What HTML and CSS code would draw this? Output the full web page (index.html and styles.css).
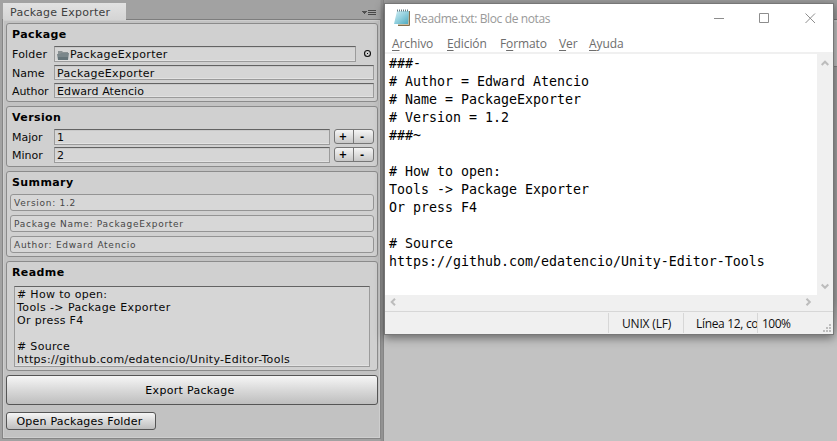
FILE: index.html
```
<!DOCTYPE html>
<html lang="es">
<head>
<meta charset="utf-8">
<title>Package Exporter</title>
<link rel="stylesheet" href="styles.css">
</head>
<body>
<main class="desktop">
  <section class="exporter">
    <header class="tabs">
      <div class="tab"><span class="t-tab">Package Exporter</span></div>
      <svg class="tab-menu" width="14" height="6" viewBox="0 0 14 6" shape-rendering="crispEdges"><path d="M0 1h5v1H4v1H3v1H2V3H1V2H0z" fill="#505050"/><path d="M6 0h8v1H6zM6 2h8v1H6zM6 4h8v1H6z" fill="#484848"/></svg>
    </header>
    <div class="panel">
      <div class="group package">
        <h2>Package</h2>
        <div class="row folder"><label class="l-folder">Folder</label>
          <div class="field object"><svg width="12" height="10" viewBox="0 0 12 10"><path d="M1 2V1h4l1 1h5v7H1z" fill="#8b9294"/><path d="M0 4h3l1-1h8l-1 7H1z" fill="#7b878b"/><path d="M1 7h10v3H1z" fill="#66757a"/></svg><span class="t-pe">PackageExporter</span></div>
          <svg class="picker" width="9" height="9" viewBox="0 0 9 9"><circle cx="4.5" cy="4.5" r="3" fill="none" stroke="#111" stroke-width="1.1"/><path d="M4 4h1v1H4z" fill="#000"/></svg>
        </div>
        <div class="row name"><label class="l-name">Name</label><div class="field"><span class="t-pe">PackageExporter</span></div></div>
        <div class="row author"><label class="l-author">Author</label><div class="field"><span class="t-ea">Edward Atencio</span></div></div>
      </div>
      <div class="group version">
        <h2>Version</h2>
        <div class="row major"><label>Major</label><div class="field"><span>1</span></div><div class="stepper"><b>+</b><b>-</b></div></div>
        <div class="row minor"><label>Minor</label><div class="field"><span>2</span></div><div class="stepper"><b>+</b><b>-</b></div></div>
      </div>
      <div class="group summary">
        <h2>Summary</h2>
        <div class="help"><span>Version: 1.2</span></div>
        <div class="help"><span>Package Name: PackageExporter</span></div>
        <div class="help"><span>Author: Edward Atencio</span></div>
      </div>
      <div class="group readme">
        <h2>Readme</h2>
        <div class="area"><p># How to open:</p><p class="wide">Tools -&gt; Package Exporter</p><p>Or press F4</p><p>&nbsp;</p><p># Source</p><p>https://github.com/edatencio/Unity-Editor-Tools</p></div>
      </div>
      <div class="button export"><span>Export Package</span></div>
      <div class="button open"><span>Open Packages Folder</span></div>
    </div>
  </section>
  <section class="backdrop">
    <div class="notepad">
      <header class="title">
        <svg width="17" height="17" viewBox="0 0 17 17"><defs><linearGradient id="n" x2="1" y2="1"><stop stop-color="#d2eef4"/><stop offset=".5" stop-color="#91cfdd"/><stop offset="1" stop-color="#4ba8bd"/></linearGradient></defs><path d="M4 2h12v14H4z" fill="#c9bfa5"/><path d="M15.500 2v14.500H4" fill="none" stroke="#846f4c"/><path d="M3 2h12l-1 13H0z" fill="url(#n)"/><path d="M3 1.500h12" stroke="#687f85" stroke-width="2" stroke-dasharray="1 1"/></svg>
        <span class="caption">Readme.txt: Bloc de notas</span>
        <svg class="controls" width="102" height="11" viewBox="0 0 102 11" fill="none" stroke="#8d8d8d"><path d="M0 5.500h10M45.500.5h9v9h-9z"/><path d="M91.500.5l9.500 9.500M101 .5l-9.500 9.500"/></svg>
      </header>
      <nav class="menu"><span class="m1"><u>A</u>rchivo</span><span class="m2"><u>E</u>dición</span><span class="m3">F<u>o</u>rmato</span><span class="m4"><u>V</u>er</span><span class="m5"><u>A</u>yuda</span></nav>
      <div class="editor">
<pre class="text">###-
# Author = Edward Atencio
# Name = PackageExporter
# Version = 1.2
###~

# How to open:
Tools -&gt; Package Exporter
Or press F4

# Source
https://github.com/edatencio/Unity-Editor-Tools</pre>
        <div class="vscroll"><svg width="8" height="7" viewBox="0 0 8 7"><path d="M.7 5L4 1.700 7.300 5" /></svg><svg width="8" height="7" viewBox="0 0 8 7"><path d="M.7 1.500L4 4.800l3.300-3.300"/></svg></div>
      </div>
      <div class="hscroll"><svg width="7" height="8" viewBox="0 0 7 8"><path d="M5 .7L1.700 4 5 7.300"/></svg><svg width="7" height="8" viewBox="0 0 7 8"><path d="M1.500.7L4.800 4 1.500 7.300"/></svg></div>
      <footer class="status"><div class="s0"></div><div class="s1"><span>UNIX (LF)</span></div><div class="s2"><span>Línea 12, co</span></div><div class="s3"><span>100%</span></div>
        <svg width="8" height="8" viewBox="0 0 8 8" fill="#bdbdbd"><path d="M6 0h2v2H6zM3 3h2v2H3zM6 3h2v2H6zM0 6h2v2H0zM3 6h2v2H3zM6 6h2v2H6z"/></svg></footer>
    </div>
  </section>
</main>
</body>
</html>
```
FILE: styles.css
```
* { box-sizing: border-box; }
body { margin: 0; width: 837px; height: 441px; overflow: hidden; font: 11px "DejaVu Sans", sans-serif; color: #090909; }
h2, p, pre { margin: 0; }
svg { display: block; flex: none; }
.desktop { display: flex; width: 837px; height: 441px; background: #a2a2a2; }

.exporter { width: 384px; height: 441px; padding: 3px 2px 2px 2px; border-right: 1px solid #858585; background: linear-gradient(90deg, #a2a2a2 380px, #929292 381px); }
.tabs { display: flex; justify-content: space-between; height: 16px; padding: 0 5px 0 1px; }
.tab { width: 123px; height: 17px; padding-left: 7px; background: linear-gradient(#e2e2e2, #d4d4d4); line-height: 19px; color: #404040; white-space: nowrap; }
.t-tab { letter-spacing: .25px; }
.tab-menu { margin-top: 7px; }
.panel { height: 420px; width: 379px; padding: 3px 2px 3px 3px; border: 1px solid #858585; border-top-color: #7d7d7d; background: #c2c2c2; box-shadow: inset 0 0 0 1px #cecece; }

.group { width: 372px; margin-bottom: 4px; padding: 0 3px 0 5px; border: 1px solid #8b8b8b; border-radius: 3px; background: #d0d0d0; }
.package { height: 79px; }
.version { height: 61px; }
.summary { height: 86px; }
.readme { height: 110px; }
h2 { height: 21px; padding-top: 4px; font-size: 11px; line-height: 14px; letter-spacing: .4px; color: #000; }
.row { display: flex; margin-bottom: 3px; line-height: 15px; white-space: nowrap; }
.row label { width: 42px; height: 15px; flex: none; padding-top: 1px; }
.field { flex: 1; height: 15px; padding-left: 2px; border: 1px solid #9b9b9b; border-top-color: #636363; background: #d6d6d6; box-shadow: inset 0 -1px #e2e2e2, inset 0 1px #c9c9c9; line-height: 15px; }
.folder { margin: 1px 0 3px; }
.object { display: flex; height: 16px; flex: 0 0 302px; }
.object svg { margin: 3px 1px 0 0; }
.picker { margin: 3px 0 0 7px; }
.t-pe { letter-spacing: .32px; }
.t-ea { letter-spacing: .1px; }
.l-folder { letter-spacing: .2px; }
.l-author { letter-spacing: -.1px; }
.major { margin-top: 1px; }
.version .field { flex: 0 0 276px; height: 16px; line-height: 16px; }
.version .row { margin-bottom: 2px; }
.stepper { display: flex; width: 40px; height: 15px; margin-left: 4px; border: 1px solid #777; border-radius: 3px; background: linear-gradient(#f5f5f5, #c8c8c8); }
.stepper b { flex: 1; padding-right: 2px; font-size: 10px; text-align: center; line-height: 13px; color: #000; }
.stepper b + b { border-left: 1px solid #777; padding-right: 3px; }

.summary { padding-left: 3px; }
.summary h2 { height: 22px; padding-left: 2px; }
.help { height: 17px; margin-bottom: 4px; padding-left: 3px; border: 1px solid #949494; border-radius: 3px; background: #d7d7d7; color: #464646; font-size: 9px; line-height: 16px; letter-spacing: .73px; }
.readme h2 { height: 24px; }
.area { width: 356px; height: 81px; margin-left: 2px; padding: 1px 2px; border: 1px solid #9b9b9b; border-top-color: #636363; background: #d6d6d6; box-shadow: inset 0 -1px #e2e2e2; line-height: 13px; white-space: nowrap; }
.area p { height: 13px; letter-spacing: .32px; }
.area .wide { letter-spacing: .4px; }
.button { border: 1px solid #555; border-radius: 3px; background: linear-gradient(#f6f6f6, #d9d9d9 50%, #bebebe); color: #000; letter-spacing: .3px; text-align: center; }
.export { width: 372px; height: 30px; padding-right: 4px; line-height: 29px; }
.open { width: 150px; height: 18px; margin-top: 7px; padding-right: 3px; line-height: 17px; letter-spacing: .22px; }

.backdrop { width: 453px; height: 441px; padding: 3px 3px 0 0; background: linear-gradient(#9c9c9c 0 19px, #777 19px 20px, #ccc 20px 22px, #c2c2c2 22px 66px, #858585 66px 67px, #a2a2a2 67px 300px, #c2c2c2 334px); }
.notepad { width: 450px; height: 332px; border: 1px solid #777; background: #fff; box-shadow: 0 3px 9px #0007; font-family: "Open Sans", sans-serif; }
.title { display: flex; height: 31px; padding: 5px 0 0 9px; font-size: 12px; line-height: 20px; color: #999; white-space: nowrap; }
.caption { width: 220px; margin-left: 3px; letter-spacing: -.38px; }
.controls { margin: 4px 0 0 80px; }
.menu { display: flex; height: 17px; padding-left: 7px; font-size: 12px; line-height: 18px; letter-spacing: -.1px; color: #6d6d6d; white-space: nowrap; }
.menu span { flex: none; }
.menu u { text-underline-offset: 2px; text-decoration-skip-ink: none; }
.m1 { width: 55px; } .m2 { width: 53px; } .m3 { width: 59px; } .m4 { width: 30px; }
.editor { display: flex; height: 243px; border-top: 2px solid #f0f0f0; }
.text { width: 432px; padding: 1px 0 0 4px; font: 13.29px/18px "DejaVu Sans Mono", monospace; color: #000; }
.vscroll { display: flex; flex-direction: column; justify-content: space-between; width: 16px; padding: 6px 0 5px 4px; background: #f0f0f0; }
.vscroll path, .hscroll path { fill: none; stroke: #bcbcbc; stroke-width: 2; }
.hscroll { display: flex; justify-content: space-between; height: 16px; padding: 3px 21px 0 5px; background: #f0f0f0; }
.status { display: flex; height: 23px; padding-top: 1px; border-top: 1px solid #d7d7d7; background: #f0f0f0; font-size: 12px; line-height: 22px; color: #101010; white-space: nowrap; }
.status div { height: 20px; border-right: 1px solid #d7d7d7; overflow: hidden; }
.s0 { width: 224px; }
.s1 { width: 75px; padding-left: 13px; letter-spacing: -.18px; }
.s2 { width: 74px; padding-left: 12px; letter-spacing: -.32px; }
.status .s3 { width: 65px; padding-left: 4px; border: 0; letter-spacing: -.5px; }
.status svg { margin: 11px 0 0 0; }
```
